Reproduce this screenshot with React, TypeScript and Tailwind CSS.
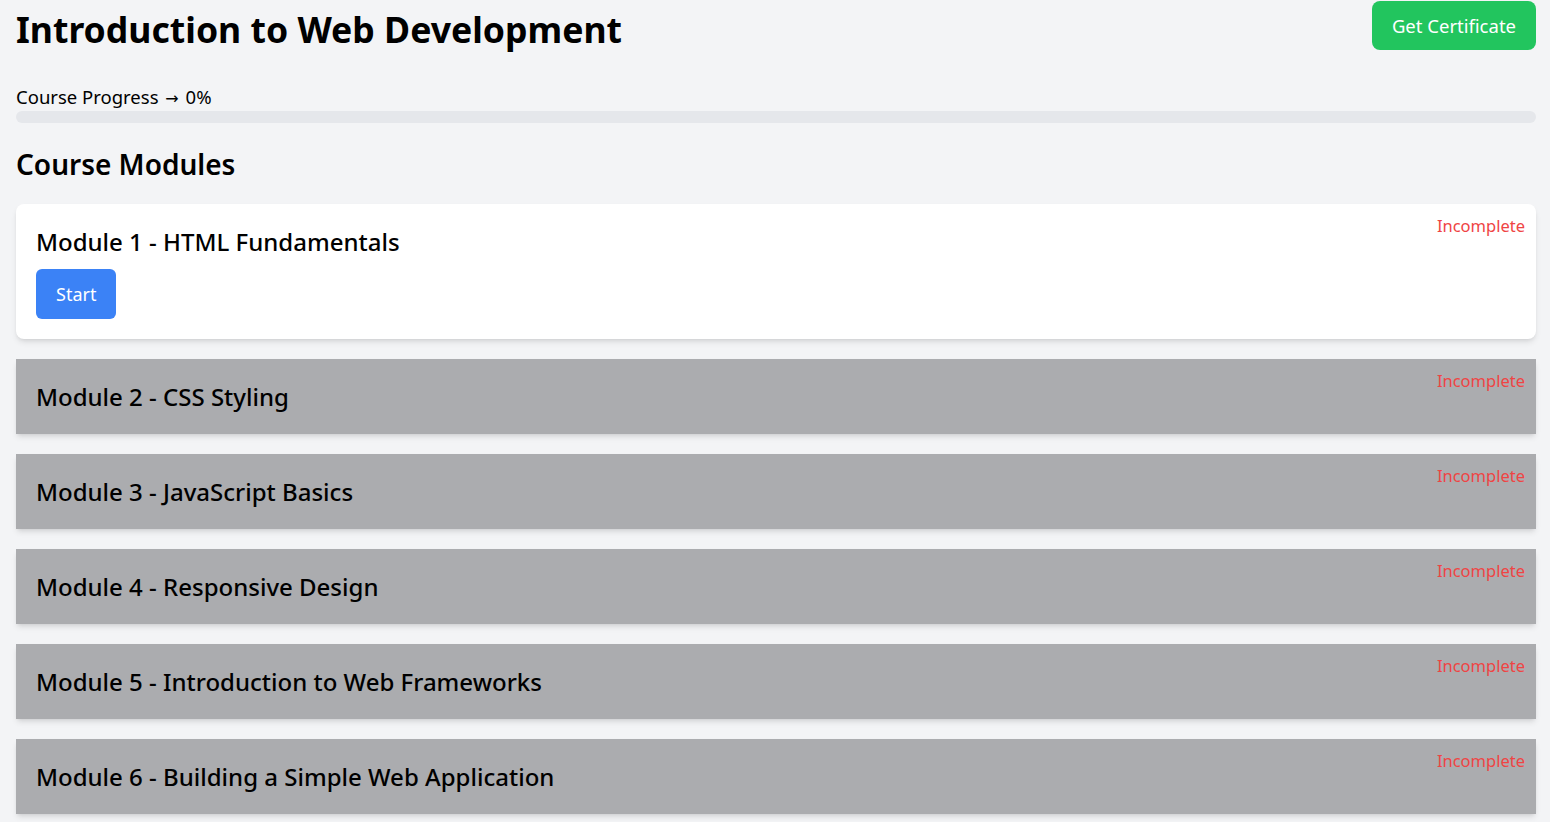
const modules = [
  "Module 1 - HTML Fundamentals",
  "Module 2 - CSS Styling",
  "Module 3 - JavaScript Basics",
  "Module 4 - Responsive Design",
  "Module 5 - Introduction to Web Frameworks",
  "Module 6 - Building a Simple Web Application",
];

export default function App() {
  return (
    <div className="h-screen overflow-hidden bg-[#f3f4f6] pl-4 pr-3.5 pt-px font-['Noto_Sans',sans-serif] text-black">
      <header className="flex items-start justify-between">
        <h1 className="mt-2 text-[35.6px] leading-[40px] font-bold">Introduction to Web Development</h1>
        <button className="bg-[#22c55e] text-white text-[18.5px] leading-[29px] px-5 py-2.5 rounded-lg">
          Get Certificate
        </button>
      </header>

      <section className="mt-8">
        <p className="text-[18.5px] leading-[29px]">
          Course Progress <span className="mx-0.5 font-['DejaVu_Sans',sans-serif] text-[16px] leading-none">→</span> 0%
        </p>
        <div className="h-3 w-full rounded-full bg-[#e5e7eb]" />
      </section>

      <h2 className="mt-[23px] text-[28px] leading-[36px] font-semibold">Course Modules</h2>

      <div className="mt-[22px] flex flex-col gap-5">
        {modules.map((title, i) =>
          i === 0 ? (
            <div key={title} className="relative bg-white rounded-lg shadow-md p-5">
              <h3 className="text-[24px] leading-[36px] font-medium mb-[9px]">{title}</h3>
              <button className="bg-[#3b82f6] text-white text-[18px] leading-[26px] px-5 py-3 rounded-md">
                Start
              </button>
              <span className="absolute top-2.5 right-[11px] text-[#ef4444] text-[16.5px]">Incomplete</span>
            </div>
          ) : (
            <div key={title} className="relative bg-[#abacaf] shadow-md px-5 py-5">
              <h3 className="text-[24px] leading-[35px] font-medium">{title}</h3>
              <span className="absolute top-2.5 right-[11px] text-[#ef4444] text-[16.5px]">Incomplete</span>
            </div>
          )
        )}
      </div>
    </div>
  );
}
